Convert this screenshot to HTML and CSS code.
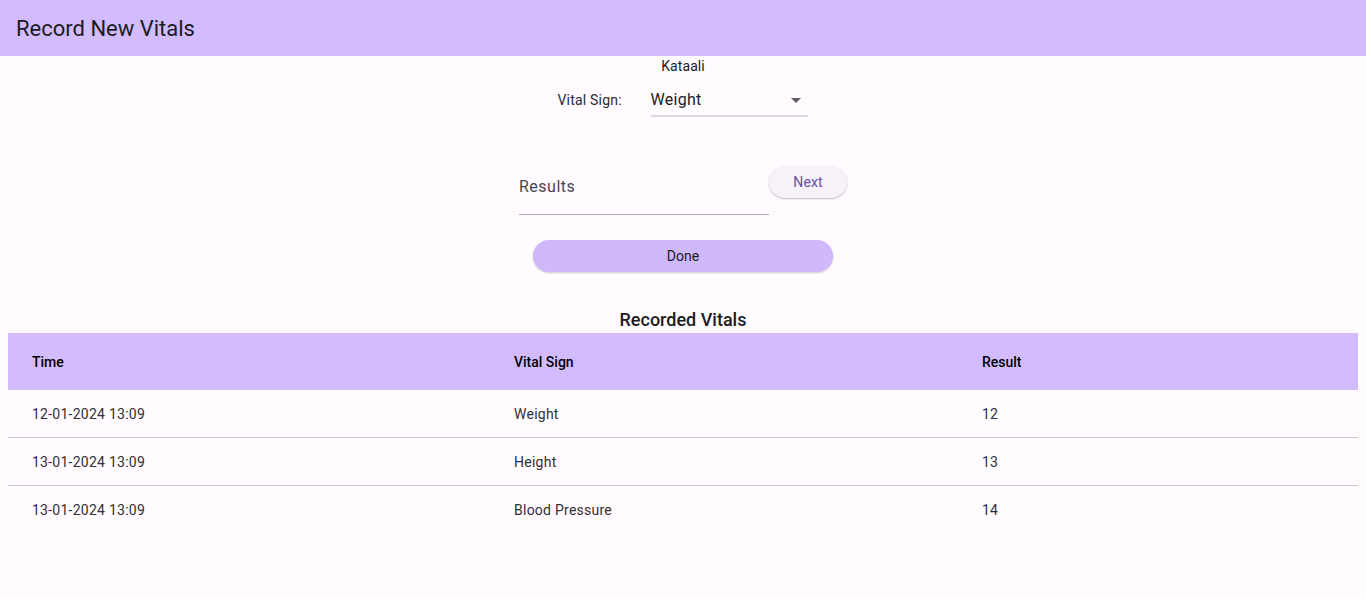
FILE: index.html
```html
<!DOCTYPE html>
<html>
<head>
<meta charset="utf-8">
<link rel="stylesheet" href="styles.css">
</head>
<body>
<header class="appbar"><h1 class="title">Record New Vitals</h1></header>
<main class="content">
  <div class="patient">Kataali</div>
  <div class="vital-row">
    <span class="vital-label">Vital Sign:</span>
    <div class="dropdown">
      <span class="dropdown-value">Weight</span>
      <svg class="dropdown-arrow" width="10" height="5" viewBox="0 0 10 5"><path d="M0 0 L10 0 L5 5 Z" fill="#5f5f63"/></svg>
    </div>
  </div>
  <div class="results-row">
    <div class="results-field"><span class="results-label">Results</span></div>
    <button class="btn-next">Next</button>
  </div>
  <button class="btn-done">Done</button>
  <h2 class="section-title">Recorded Vitals</h2>
  <div class="table">
    <div class="tr thead"><div>Time</div><div>Vital Sign</div><div>Result</div></div>
    <div class="tr"><div>12-01-2024 13:09</div><div>Weight</div><div>12</div></div>
    <div class="tr"><div>13-01-2024 13:09</div><div>Height</div><div>13</div></div>
    <div class="tr last"><div>13-01-2024 13:09</div><div>Blood Pressure</div><div>14</div></div>
  </div>
</main>
</body>
</html>
```
FILE: styles.css
```css
* { box-sizing: border-box; }
html, body { margin: 0; padding: 0; }
body {
  background: #fffbfe;
  font-family: Roboto, "Noto Sans", sans-serif;
  color: #1d1b20;
  width: 1366px;
  height: 599px;
  overflow: hidden;
}
.appbar {
  height: 56px;
  background: #d2bcfe;
  display: flex;
  align-items: center;
  padding-left: 16px;
}
.title {
  margin: 0;
  font-size: 22px;
  font-weight: 400;
  color: #1d1b20;
}
.content {
  display: flex;
  flex-direction: column;
  align-items: center;
  padding: 0 8px;
}
.patient {
  margin-top: 2px;
  height: 16px;
  line-height: 16px;
  font-size: 14px;
  letter-spacing: 0.1px;
}
.vital-row {
  margin-top: 3px;
  display: flex;
  align-items: flex-start;
  margin-left: -1px;
}
.vital-label {
  font-size: 14px;
  letter-spacing: 0.2px;
  line-height: 20px;
  margin-top: 13px;
  width: 93px;
  color: #2b2930;
}
.dropdown {
  width: 157px;
  height: 40px;
  display: flex;
  align-items: center;
  justify-content: space-between;
  border-bottom: 2px solid #dcd9df;
  padding-right: 7px;
  padding-top: 6px;
  padding-bottom: 0;
}
.dropdown-value {
  font-size: 16px;
  letter-spacing: 0.3px;
  color: #1d1b20;
}
.dropdown-arrow { display: block; margin-top: 2px; }
.results-row {
  margin-top: 49px;
  display: flex;
  align-items: flex-start;
}
.results-field {
  width: 250px;
  height: 49px;
  border-bottom: 1px solid #b4afb8;
  padding-top: 11px;
}
.results-label {
  font-size: 16px;
  letter-spacing: 0.5px;
  color: #49454f;
}
.btn-next {
  width: 78px;
  height: 32px;
  border: none;
  border-radius: 16px;
  background: #f7f2fa;
  color: #6750a4;
  font-family: Roboto, sans-serif;
  font-size: 14px;
  letter-spacing: 0.1px;
  box-shadow: 0 1px 2px rgba(0,0,0,0.25);
  padding: 0;
}
.btn-done {
  margin-top: 25px;
  width: 300px;
  height: 32px;
  border: none;
  border-radius: 16px;
  background: #cfb8fb;
  color: #1d1b20;
  font-family: Roboto, sans-serif;
  font-size: 14px;
  letter-spacing: 0.1px;
  box-shadow: 0 1px 2px rgba(0,0,0,0.2);
  padding: 0;
}
.section-title {
  margin: 35px 0 0;
  font-size: 18px;
  font-weight: 500;
  line-height: 26px;
  height: 26px;
}
.table {
  width: 1350px;
  align-self: stretch;
}
.tr {
  display: grid;
  grid-template-columns: 482px 468px 1fr;
  padding-left: 24px;
  height: 48px;
  align-items: center;
  font-size: 14px;
  letter-spacing: 0.25px;
  color: #322f37;
  border-bottom: 1px solid #cac6cc;
}
.tr.thead {
  height: 57px;
  background: #d2bcfe;
  font-weight: 500;
  color: #000;
  letter-spacing: 0;
  border-bottom: none;
}
.tr.last { border-bottom: none; }
```
